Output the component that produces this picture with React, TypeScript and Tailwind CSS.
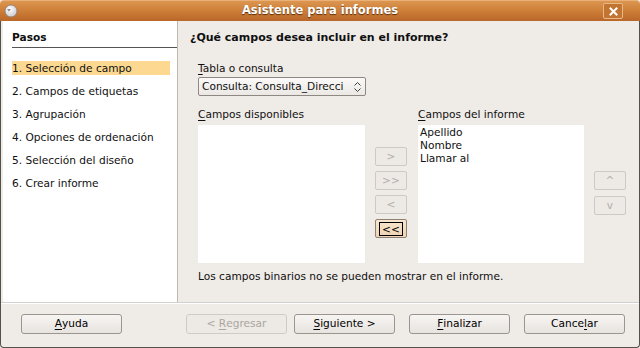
import React from "react";

const steps = [
  "Selección de campo",
  "Campos de etiquetas",
  "Agrupación",
  "Opciones de ordenación",
  "Selección del diseño",
  "Crear informe",
];

function Mnemonic({ text, at = 0 }: { text: string; at?: number }) {
  return (
    <>
      {text.slice(0, at)}
      <span className="underline underline-offset-[2px]">{text[at]}</span>
      {text.slice(at + 1)}
    </>
  );
}

function SmallButton({ label, disabled, focused }: { label: string; disabled?: boolean; focused?: boolean }) {
  if (focused) {
    return (
      <div className="w-[32px] h-[19px] rounded-[2px] border border-[#8e8272] bg-gradient-to-b from-[#f8e6d0] to-[#efd3b2] flex items-center justify-center">
        <span className="border border-black px-[2px] leading-[12px] text-black">{label}</span>
      </div>
    );
  }
  return (
    <div
      className={
        "w-[32px] h-[19px] rounded-[2px] border flex items-center justify-center " +
        (disabled ? "border-[#cdc9c4] bg-[#ede9e5] text-[#b3afaa]" : "border-[#9d9893] bg-[#f0eeeb] text-black")
      }
    >
      {label}
    </div>
  );
}

function DialogButton({ children, disabled, className = "" }: { children: React.ReactNode; disabled?: boolean; className?: string }) {
  return (
    <div
      className={
        "w-[101px] h-[20px] rounded-[3px] border flex items-center justify-center whitespace-pre " +
        (disabled
          ? "border-[#cfcbc6] bg-[#ede9e5] text-[#aaa6a1] "
          : "border-[#9a958f] bg-gradient-to-b from-[#f7f5f3] to-[#e7e3df] text-black ") +
        className
      }
    >
      {children}
    </div>
  );
}

export default function App() {
  return (
    <div
      className="w-[640px] h-[348px] flex flex-col bg-[#efebe7] text-[10.6px] text-[#101010] overflow-hidden"
      style={{ fontFamily: '"DejaVu Sans", "Liberation Sans", sans-serif' }}
    >
      {/* title bar */}
      <div className="h-[21px] shrink-0 flex items-center bg-gradient-to-b from-[#dc9650] via-[#cd7e37] to-[#b9672a] border-t border-[#e9b07a] rounded-t-[4px] px-[4px]">
        <div className="w-[40px] flex">
          <svg width="14" height="14" viewBox="0 0 14 14">
            <defs>
              <radialGradient id="ic" cx="0.4" cy="0.35" r="0.7">
                <stop offset="0" stopColor="#ffffff" />
                <stop offset="1" stopColor="#c9c9cf" />
              </radialGradient>
            </defs>
            <circle cx="7" cy="7" r="6" fill="url(#ic)" stroke="#8a7d70" strokeWidth="0.8" />
            <path d="M3.5 5.5 L6.5 5.5 M4 7 L6 6" stroke="#6b6b73" strokeWidth="0.8" />
          </svg>
        </div>
        <div
          className="flex-1 text-center text-white font-bold text-[11.5px]"
          style={{ textShadow: "0 1px 1px #5a2f0c" }}
        >
          Asistente para informes
        </div>
        <div className="w-[40px] flex justify-end">
          <div className="w-[20px] h-[16px] mr-[13px] rounded-[2px] border border-[#e8b887] bg-[#c27431] flex items-center justify-center">
            <svg width="9" height="9" viewBox="0 0 9 9">
              <path d="M1.5 1.5 L7.5 7.5 M7.5 1.5 L1.5 7.5" stroke="#ffffff" strokeWidth="2" strokeLinecap="square" />
            </svg>
          </div>
        </div>
      </div>

      {/* body */}
      <div className="flex-1 flex flex-col border-x border-b border-[#55504a] rounded-b-[4px]">
        <div className="h-[282px] flex border-b border-[#d3cfca]">
          {/* steps */}
          <div className="w-[175px] ml-[2px] bg-white border-r border-[#bdb8b2] flex flex-col pl-[9px]">
            <div className="mt-[10px] font-bold border-b border-[#555] pb-[3px] leading-[13px]">Pasos</div>
            <div className="mt-[13px] flex flex-col gap-[9px]">
              {steps.map((s, i) => (
                <div
                  key={s}
                  className={"w-[158px] h-[14px] leading-[14px] " + (i === 0 ? "bg-[#fcd890]" : "")}
                >
                  {i + 1}.&nbsp;{s}
                </div>
              ))}
            </div>
          </div>

          {/* content */}
          <div className="flex-1 flex flex-col pl-[12px]">
            <div className="mt-[10px] font-bold leading-[14px] text-[11px]">¿Qué campos desea incluir en el informe?</div>
            <div className="ml-[8px] mt-[16px] leading-[14px]">
              <Mnemonic text="Tabla o consulta" />
            </div>
            <div className="ml-[8px] mt-[2px] w-[168px] h-[19px] rounded-[2px] border border-[#8d8883] bg-gradient-to-b from-[#fbfaf9] to-[#ebe8e4] flex items-center pl-[3px] pr-[2px]">
              <div className="flex-1 overflow-hidden whitespace-nowrap">Consulta: Consulta_Direcci</div>
              <svg width="11" height="14" viewBox="0 0 11 14" className="ml-[1px]">
                <path d="M2.5 5.5 L5.5 2.5 L8.5 5.5 M2.5 8.5 L5.5 11.5 L8.5 8.5" stroke="#3c3c3c" strokeWidth="1" fill="none" />
              </svg>
            </div>

            <div className="ml-[8px] mt-[11px] flex">
              {/* available */}
              <div className="flex flex-col">
                <div className="leading-[14px]">
                  <Mnemonic text="Campos disponibles" />
                </div>
                <div className="mt-[4px] w-[167px] h-[138px] bg-white" />
              </div>
              <div className="ml-[10px] mt-[40px] flex flex-col gap-[5px]">
                <SmallButton label=">" disabled />
                <SmallButton label=">>" disabled />
                <SmallButton label="<" disabled />
                <SmallButton label="<<" focused />
              </div>
              {/* selected */}
              <div className="ml-[11px] flex flex-col">
                <div className="leading-[14px]">
                  <Mnemonic text="Campos del informe" />
                </div>
                <div className="mt-[4px] w-[166px] h-[138px] bg-white pl-[2px] pt-[1px] leading-[13px]">
                  <div>Apellido</div>
                  <div>Nombre</div>
                  <div>Llamar al</div>
                </div>
              </div>
              <div className="ml-[10px] mt-[64px] flex flex-col gap-[6px]">
                <SmallButton label="^" disabled />
                <SmallButton label="v" disabled />
              </div>
            </div>

            <div className="ml-[8px] mt-[6px] leading-[14px]">Los campos binarios no se pueden mostrar en el informe.</div>
          </div>
        </div>

        {/* buttons */}
        <div className="flex-1 flex items-center pl-[20px] pb-[4px] border-t border-white">
          <DialogButton>
            <Mnemonic text="Ayuda" />
          </DialogButton>
          <DialogButton disabled className="ml-[64px]">
            {"< "}
            <Mnemonic text="Regresar" />
          </DialogButton>
          <DialogButton className="ml-[7px]">
            <Mnemonic text="Siguiente >" />
          </DialogButton>
          <DialogButton className="ml-[14px]">
            <Mnemonic text="Finalizar" />
          </DialogButton>
          <DialogButton className="ml-[14px]">
            <Mnemonic text="Cancelar" at={5} />
          </DialogButton>
        </div>
      </div>
    </div>
  );
}
